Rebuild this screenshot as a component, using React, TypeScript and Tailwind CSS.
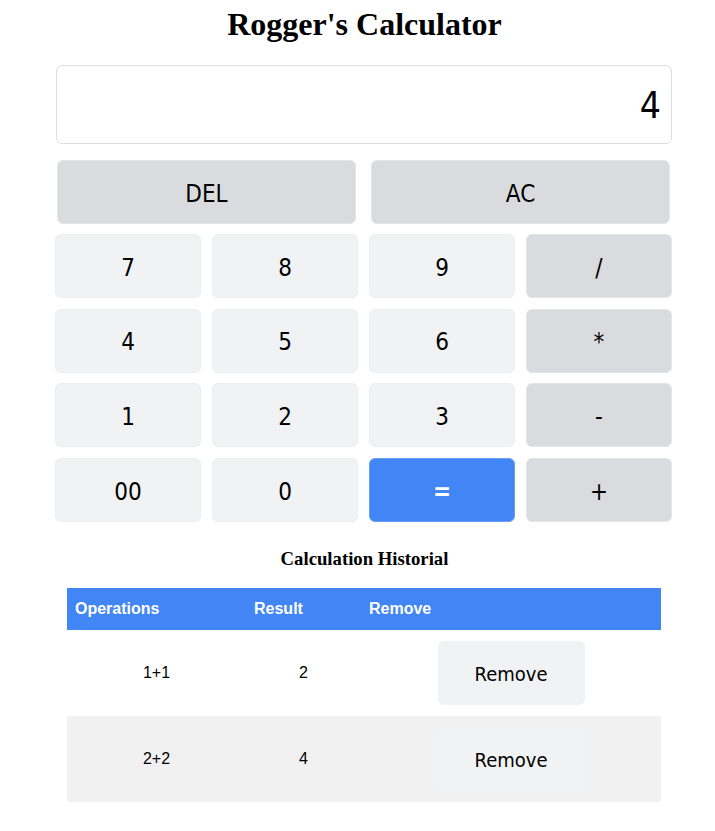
import React from 'react';

const numBtn = 'h-16 pt-[3px] rounded-md bg-[#f1f2f4] border border-[#eceef1] text-[24px] text-black flex items-center justify-center';
const opBtn = 'h-16 pt-[3px] rounded-md bg-[#dadbdf] border border-[#e4e5e8] text-[24px] text-black flex items-center justify-center';

const keys: { label: string; kind: 'num' | 'op' | 'eq' }[] = [
  { label: '7', kind: 'num' },
  { label: '8', kind: 'num' },
  { label: '9', kind: 'num' },
  { label: '/', kind: 'op' },
  { label: '4', kind: 'num' },
  { label: '5', kind: 'num' },
  { label: '6', kind: 'num' },
  { label: '*', kind: 'op' },
  { label: '1', kind: 'num' },
  { label: '2', kind: 'num' },
  { label: '3', kind: 'num' },
  { label: '-', kind: 'op' },
  { label: '00', kind: 'num' },
  { label: '0', kind: 'num' },
  { label: '=', kind: 'eq' },
  { label: '+', kind: 'op' },
];

const history = [
  { op: '1+1', result: '2' },
  { op: '2+2', result: '4' },
];

export default function App() {
  const btnFont = { fontFamily: '"DejaVu Sans Condensed", "DejaVu Sans", sans-serif' };
  return (
    <div className="w-[715px] min-h-[831px] bg-white">
      <h1 className="pt-[5px] pl-[14px] text-center text-[32px] font-bold leading-[38px] text-black font-['Liberation_Serif',serif]">
        Rogger's Calculator
      </h1>

      <div className="ml-[55px] mt-[22px] w-[617px]">
        <div
          className="ml-[1px] w-[616px] h-[79px] rounded-md border border-[#dcdde0] flex items-center justify-end pr-[10px] pt-[2px] text-[37px] text-black"
          style={btnFont}
        >
          4
        </div>

        <div className="mt-[16px] ml-[2px] w-[613px] grid grid-cols-2 gap-[15px]" style={btnFont}>
          <button className={opBtn}>DEL</button>
          <button className={opBtn}>AC</button>
        </div>

        <div className="mt-[10px] grid grid-cols-4 gap-x-[11px] gap-y-[10.7px] w-[617px]" style={btnFont}>
          {keys.map((k) => (
            <button
              key={k.label}
              className={
                k.kind === 'eq'
                  ? 'h-16 pt-[3px] rounded-md bg-[#4285f4] border border-[#6a9ef5] text-[24px] text-white font-bold flex items-center justify-center'
                  : k.kind === 'op'
                  ? opBtn
                  : numBtn
              }
            >
              {k.label}
            </button>
          ))}
        </div>
      </div>

      <h2 className="mt-[23px] pl-[14px] text-center text-[18.72px] font-bold text-black font-['Liberation_Serif',serif]">
        Calculation Historial
      </h2>

      <table className="mx-[67px] mt-[15px] w-[594px] table-fixed border-collapse font-['Liberation_Sans',Arial,sans-serif]">
        <colgroup>
          <col className="w-[179px]" />
          <col className="w-[115px]" />
          <col className="w-[300px]" />
        </colgroup>
        <thead>
          <tr className="h-[42px] bg-[#4285f4] text-white text-[16px] font-bold text-left">
            <th className="pl-[8px]">Operations</th>
            <th className="pl-[8px]">Result</th>
            <th className="pl-[8px]">Remove</th>
          </tr>
        </thead>
        <tbody>
          {history.map((h, i) => (
            <tr key={h.op} className={`h-[86px] text-[16px] text-black text-center ${i % 2 === 1 ? 'bg-[#f1f1f2]' : 'bg-white'}`}>
              <td>{h.op}</td>
              <td>{h.result}</td>
              <td>
                <div className="flex justify-center">
                  <button
                    className="w-[147px] h-16 pt-[2px] rounded-md bg-[#f1f2f4] text-[20px] text-black"
                    style={btnFont}
                  >
                    Remove
                  </button>
                </div>
              </td>
            </tr>
          ))}
        </tbody>
      </table>
    </div>
  );
}
